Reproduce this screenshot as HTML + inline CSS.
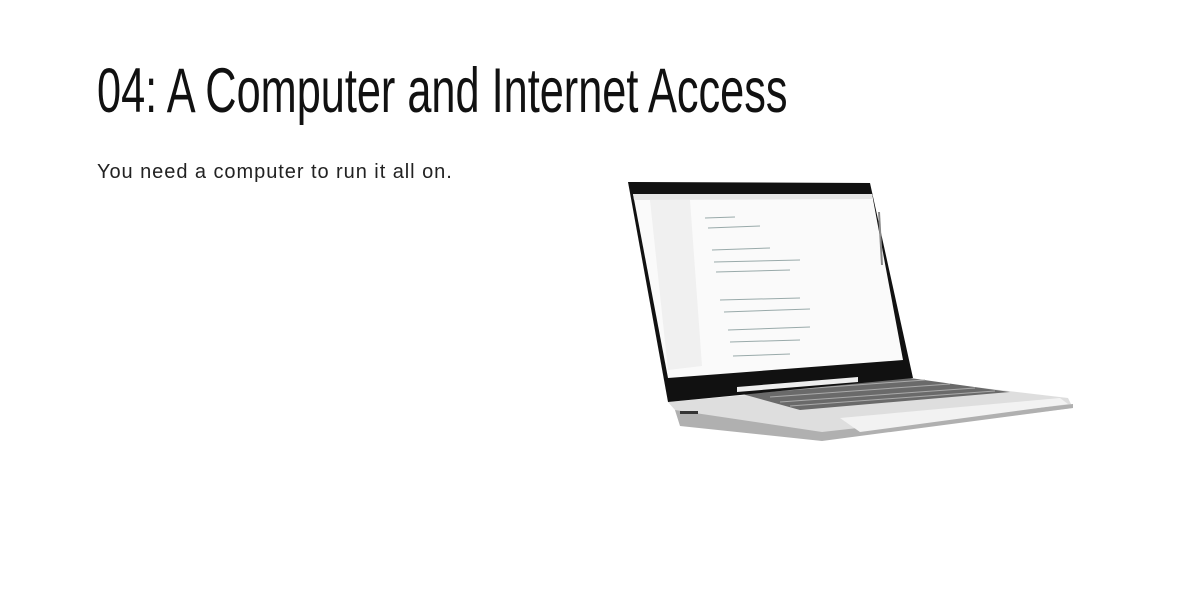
<!DOCTYPE html>
<html><head><style>
html,body{margin:0;padding:0;background:#fff;width:1179px;height:610px;overflow:hidden;font-family:"Liberation Sans",sans-serif}
#t{position:absolute;left:97px;top:55px;font-size:63px;line-height:72px;color:#111;white-space:nowrap;transform-origin:0 0;transform:scaleX(0.687)}
#s{position:absolute;left:97px;top:160px;font-size:20px;letter-spacing:0.95px;line-height:24px;color:#222;white-space:nowrap}
svg{position:absolute;left:0;top:0}
</style></head><body>
<div id="t">04: A Computer and Internet Access</div>
<div id="s">You need a computer to run it all on.</div>
<svg width="1179" height="610">
<polygon points="668,402 915,380 1068,398 1073,408 822,440 680,425 675,410" fill="#dedede"/>
<polygon points="675,410 822,432 1073,404 1073,408 822,441 680,426" fill="#b0b0b0"/>
<polygon points="735,392 910,378 1010,392 800,410" fill="#6a6a6a"/>
<g stroke="#aaa" stroke-width="1">
<line x1="760" y1="392" x2="925" y2="380"/><line x1="770" y1="397" x2="950" y2="384"/>
<line x1="780" y1="402" x2="975" y2="388"/><line x1="790" y1="406" x2="995" y2="391"/>
</g>
<polygon points="840,418 1060,398 1068,404 860,432" fill="#f2f2f2"/>
<rect x="680" y="411" width="18" height="3" fill="#333"/>
<polygon points="628,182 870,183 913,378 668,402" fill="#111"/>
<polygon points="633,194 872,194 903,360 668,378" fill="#fafafa"/>
<polygon points="633,194 872,194 873,199 634,200" fill="#e6e6e6"/>
<polygon points="650,200 690,200 702,366 668,370" fill="#f0f0f0"/>
<polygon points="737,387 858,377 858,382 737,392" fill="#eee"/>
<g stroke="#9aa" stroke-width="1">
<line x1="705" y1="218" x2="735" y2="217"/><line x1="708" y1="228" x2="760" y2="226"/>
<line x1="712" y1="250" x2="770" y2="248"/><line x1="714" y1="262" x2="800" y2="260"/>
<line x1="716" y1="272" x2="790" y2="270"/><line x1="720" y1="300" x2="800" y2="298"/>
<line x1="724" y1="312" x2="810" y2="309"/><line x1="728" y1="330" x2="810" y2="327"/>
<line x1="730" y1="342" x2="800" y2="340"/><line x1="733" y1="356" x2="790" y2="354"/>
</g>
<line x1="879" y1="212" x2="882" y2="265" stroke="#888" stroke-width="2"/>
</svg>
</body></html>
